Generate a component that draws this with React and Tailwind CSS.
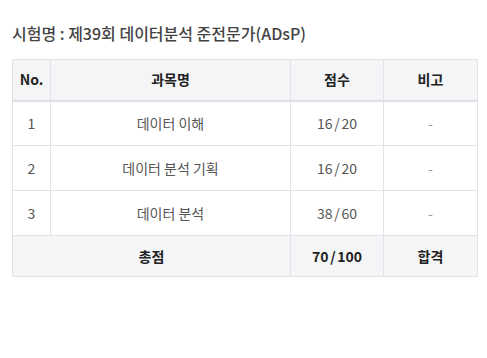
import React from 'react';

const rows = [
  { no: 1, name: '데이터 이해', score: '16 / 20', note: '-' },
  { no: 2, name: '데이터 분석 기획', score: '16 / 20', note: '-' },
  { no: 3, name: '데이터 분석', score: '38 / 60', note: '-' },
];

const App = () => {
  return (
    <div className="px-3 pt-[23px] bg-white min-h-screen font-['Noto_Sans_CJK_KR','Noto_Sans',sans-serif]">
      <h2 className="text-[16px] leading-[20px] text-[#444] font-medium mb-[16px]">
        시험명 : 제39회 데이터분석 준전문가(ADsP)
      </h2>

      <table className="w-[465px] border-collapse table-fixed text-[14px] text-center">
        <colgroup>
          <col className="w-[38px]" />
          <col className="w-[240px]" />
          <col className="w-[93px]" />
          <col className="w-[94px]" />
        </colgroup>
        <thead>
          <tr className="bg-[#f4f5f7] text-[#222] font-bold h-[41px] border-b-2 border-[#dfe1e6]">
            <th className="border border-[#e1e3e8]">No.</th>
            <th className="border border-[#e1e3e8]">과목명</th>
            <th className="border border-[#e1e3e8]">점수</th>
            <th className="border border-[#e1e3e8]">비고</th>
          </tr>
        </thead>
        <tbody className="text-[#555]">
          {rows.map(r => (
            <tr key={r.no} className="h-[45px]">
              <td className="border border-[#e1e3e8]">{r.no}</td>
              <td className="border border-[#e1e3e8]">{r.name}</td>
              <td className="border border-[#e1e3e8] [word-spacing:-1.5px]">{r.score}</td>
              <td className="border border-[#e1e3e8] text-[#999]">{r.note}</td>
            </tr>
          ))}
        </tbody>
        <tfoot>
          <tr className="bg-[#f4f5f7] text-[#222] font-bold h-[41px]">
            <td colSpan={2} className="border border-[#e1e3e8]">총점</td>
            <td className="border border-[#e1e3e8] [word-spacing:-1.5px]">70 / 100</td>
            <td className="border border-[#e1e3e8]">합격</td>
          </tr>
        </tfoot>
      </table>
    </div>
  );
};

export default App;
